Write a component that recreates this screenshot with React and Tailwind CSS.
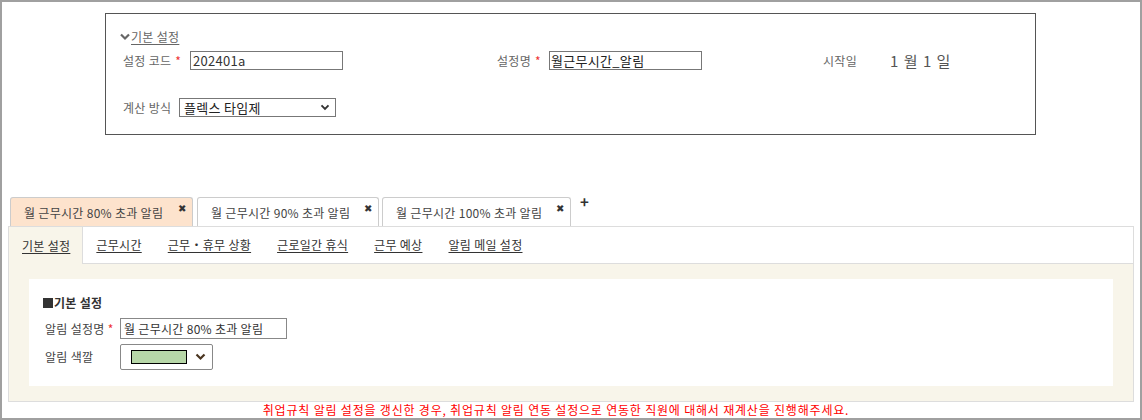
import React from "react";

const tabs = [
  { label: "월 근무시간 80% 초과 알림", w: "w-[183px]", active: true },
  { label: "월 근무시간 90% 초과 알림", w: "w-[182px]" },
  { label: "월 근무시간 100% 초과 알림", w: "w-[189px]" },
];

const subTabs = ["근무시간", "근무・휴무 상황", "근로일간 휴식", "근무 예상", "알림 메일 설정"];

function Chevron({ className }) {
  return (
    <svg viewBox="0 0 10 8" className={className}>
      <path d="M1 1.5 L5 5.5 L9 1.5" fill="none" stroke="currentColor" strokeWidth="2.2" />
    </svg>
  );
}

function Star() {
  return <span className="text-[#e33] ml-[4px]">*</span>;
}

export default function App() {
  return (
    <div className="w-[1142px] h-[420px] border-2 border-[#a0a0a0] bg-white font-['Malgun_Gothic','Noto_Sans_CJK_KR',sans-serif] text-[12px] leading-[16px] tracking-[0.3px] text-[#666] overflow-hidden">
      {/* top settings box */}
      <div className="ml-[103px] mt-[11px] w-[931px] h-[122px] border border-[#555] pl-[14px] pt-[16px]">
        <div className="flex items-center h-[14px] text-[#666]">
          <Chevron className="w-[10px] h-[8px] text-[#666] mr-[1px]" />
          <span className="underline underline-offset-2">기본 설정</span>
        </div>

        <div className="flex items-center mt-[7px] h-[19px]">
          <div className="w-[374px] flex items-center">
            <span className="w-[70px] pl-[3px]">
              설정 코드
              <Star />
            </span>
            <div className="w-[153px] h-[19px] border border-[#777] pl-[2px] text-[13px] leading-[17px] text-[#333]">
              202401a
            </div>
          </div>
          <div className="w-[326px] flex items-center">
            <span className="w-[55px] pl-[3px]">
              설정명
              <Star />
            </span>
            <div className="w-[153px] h-[19px] border border-[#777] pl-[1px] text-[13px] leading-[17px] text-[#222]">
              월근무시간_알림
            </div>
          </div>
          <div className="flex items-center pl-[3px]">
            <span>시작일</span>
            <span className="ml-[33px] text-[15px] text-[#555] tracking-[1px]">1 월 1 일</span>
          </div>
        </div>

        <div className="flex items-center mt-[28px] h-[19px]">
          <span className="w-[59px] pl-[3px]">계산 방식</span>
          <div className="w-[157px] h-[19px] border border-[#777] flex items-center justify-between pl-[4px] pr-[5px] text-[13px] text-[#222]">
            <span>플렉스 타임제</span>
            <Chevron className="w-[10px] h-[7px] text-[#333]" />
          </div>
        </div>
      </div>

      {/* tab row */}
      <div className="mt-[62px] ml-[8px] flex items-end h-[29px]">
        {tabs.map((t, i) => (
          <div
            key={t.label}
            className={`${t.w} h-[29px] ${i === 1 ? "ml-[4px]" : i === 2 ? "ml-[3px]" : ""} border border-b-0 border-[#ccc] rounded-t-[3px] flex items-center justify-between pl-[13px] pr-[6px] text-[#444] ${t.active ? "bg-[#fde3cd]" : "bg-white"}`}
          >
            <span className="pt-[2px]">{t.label}</span>
            <span className="self-start mt-[5px] text-[10px] leading-[10px] text-[#333]">✖</span>
          </div>
        ))}
        <span className="self-start ml-[9px] -mt-[2px] text-[15px] leading-[14px] font-bold text-[#333]">+</span>
      </div>

      {/* tab panel */}
      <div className="ml-[6px] w-[1126px] h-[176px] border border-[#ddd] flex flex-col">
        <div className="flex h-[37px] border-b border-[#ddd] bg-white text-[#333]">
          <div className="h-[38px] -mb-px bg-[#f8f5ea] border-r border-[#ddd] pl-[13px] pr-[12px] flex items-center">
            <span className="underline underline-offset-2">기본 설정</span>
          </div>
          {subTabs.map((s) => (
            <div key={s} className="pl-[13px] pr-[13px] flex items-center">
              <span className="underline underline-offset-2">{s}</span>
            </div>
          ))}
        </div>
        <div className="flex-1 bg-[#f8f5ea] px-[20px] pt-[15px] pb-[15px]">
          <div className="bg-white h-full pl-[14px] pt-[16px]">
            <div className="font-bold text-[#333] flex items-center">
              <span className="inline-block w-[10px] h-[10px] bg-[#333] mr-[1px]" />
              기본 설정
            </div>
            <div className="flex items-center mt-[7px] pl-[2px]">
              <span className="w-[75px] text-[#444]">
                알림 설정명
                <span className="text-[#e33] ml-[3px]">*</span>
              </span>
              <div className="w-[167px] h-[21px] border border-[#888] pl-[3px] leading-[19px] text-[#333]">
                월 근무시간 80% 초과 알림
              </div>
            </div>
            <div className="flex items-center mt-[5px] pl-[2px]">
              <span className="w-[75px] text-[#444]">알림 색깔</span>
              <div className="w-[93px] h-[26px] border border-[#888] rounded-[2px] flex items-center justify-between pl-[10px] pr-[6px]">
                <span className="w-[56px] h-[14px] bg-[#b7d7a8] border border-black" />
                <Chevron className="w-[11px] h-[8px] text-[#4a3520]" />
              </div>
            </div>
          </div>
        </div>
      </div>

      <div className="mt-[1px] pr-[30px] text-center text-[#f00] leading-[14px] tracking-[0.8px]">
        취업규칙 알림 설정을 갱신한 경우, 취업규칙 알림 연동 설정으로 연동한 직원에 대해서 재계산을 진행해주세요.
      </div>
    </div>
  );
}
